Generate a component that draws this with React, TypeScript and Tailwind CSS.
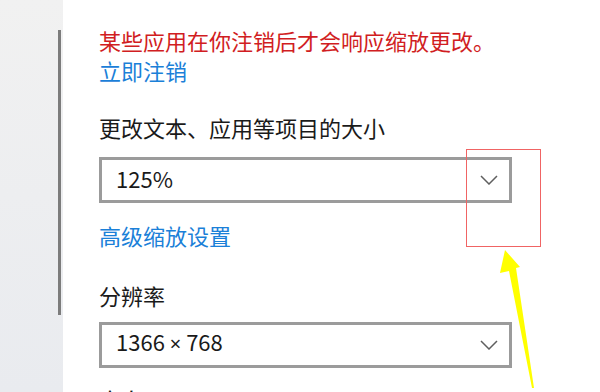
import React from 'react';

function Chevron() {
  return (
    <svg width="18" height="10" viewBox="0 0 18 10" fill="none" className="shrink-0">
      <polyline points="1,1 9,9 17,1" stroke="#5f5f5f" strokeWidth="1.5" />
    </svg>
  );
}

function Select({ children }: { children: React.ReactNode }) {
  return (
    <div className="flex h-[46px] w-[413px] items-center justify-between border-[3px] border-[#9b9b9b] bg-white pl-[14px] pr-[11px]">
      <span className="mb-[5px] text-[22px] leading-[30px] text-[#1a1a1a]">{children}</span>
      <Chevron />
    </div>
  );
}

export default function App() {
  return (
    <div
      className="relative flex h-[392px] w-[600px] overflow-hidden bg-white"
      style={{ fontFamily: '"Noto Sans CJK SC", "Noto Sans", sans-serif' }}
    >
      {/* sidebar with scrollbar */}
      <div className="flex w-[63px] shrink-0 justify-end bg-gradient-to-b from-[#f1f1f1] to-[#e9ebef] pr-[2px]">
        <div className="mt-[30px] h-[285px] w-[3px] bg-[#7c7c7c]" />
      </div>

      <div className="flex flex-col pl-[36px] pt-[25px] text-[22px] leading-[30px] text-[#1a1a1a]">
        <div className="whitespace-nowrap text-[#d11d22]">某些应用在你注销后才会响应缩放更改。</div>
        <div className="text-[#1b80d8]">立即注销</div>

        <div className="mt-[27px]">更改文本、应用等项目的大小</div>
        <div className="mt-[15px]">
          <Select>125%</Select>
        </div>

        <div className="mt-[17px] text-[#1b80d8]">高级缩放设置</div>

        <div className="mt-[30px]">分辨率</div>
        <div className="mt-[12px]">
          <Select>
            1366 <span className="font-['Noto_Sans'] text-[20px]">×</span> 768
          </Select>
        </div>

        <div className="mt-[16px]">方向</div>
      </div>

      {/* annotation: red box */}
      <div className="absolute left-[466px] top-[149px] h-[98px] w-[75px] border-[1.5px] border-[#f06464]" />

      {/* annotation: yellow arrow */}
      <svg className="absolute left-0 top-0" width="600" height="392" viewBox="0 0 600 392">
        <polygon
          points="505,250 520,267 516,268 534,388 532,388 509,271 500,273"
          fill="#ffff00"
        />
      </svg>
    </div>
  );
}
